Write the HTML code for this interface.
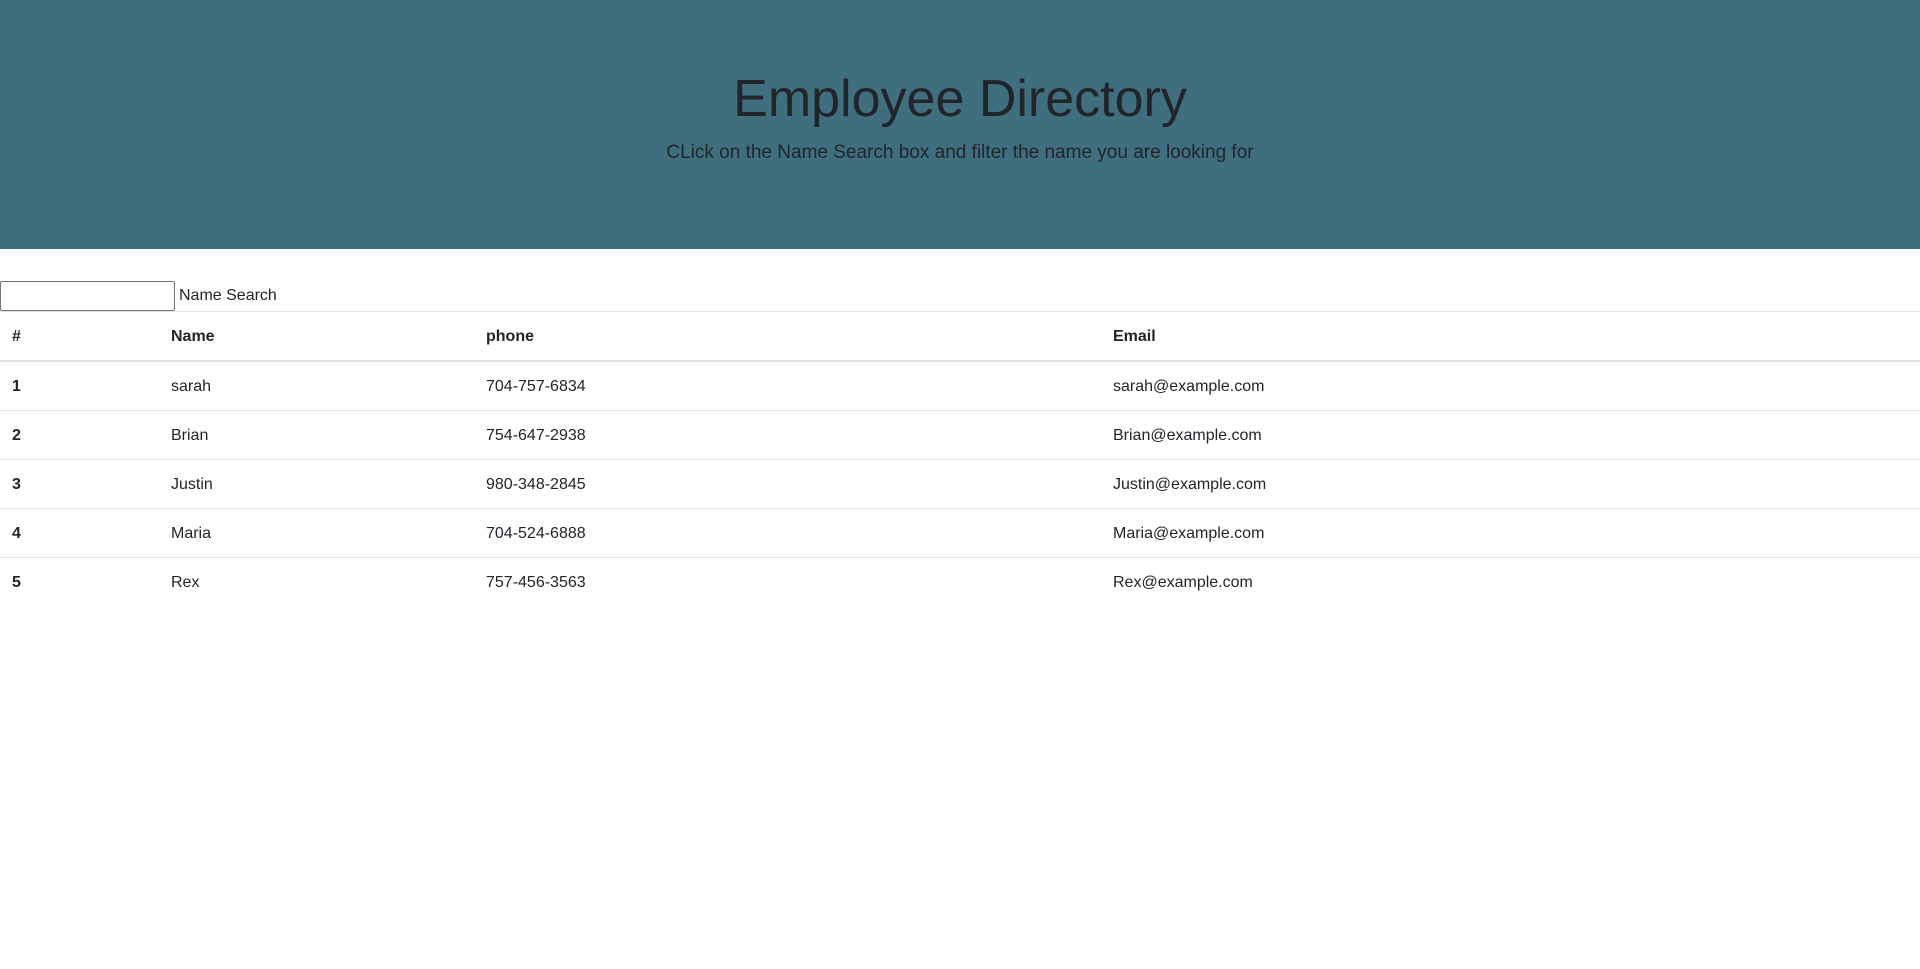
<!DOCTYPE html>
<html><head><meta charset="utf-8"><style>
body{margin:0;font-family:"Liberation Sans",sans-serif;color:#212529;background:#fff;font-size:16px;line-height:1.5}
.j{background:#3f6e7f;height:249px;text-align:center;box-sizing:border-box;padding-top:68px}
h1{margin:0;font-size:52px;font-weight:300;line-height:1.2}
.lead{margin:9px 0 0;font-size:19px;font-weight:300}
.s{margin-top:32px;height:30px;display:flex;align-items:center}
input{width:175px;height:30px;box-sizing:border-box;border:1px solid #767676;border-radius:2px;margin:0 4px 0 0;padding:0}
table{width:100%;border-collapse:collapse}
th,td{text-align:left;padding:13px 12px 11px;border-top:1px solid #dee2e6;height:24px}
thead th{border-bottom:2px solid #dee2e6;border-top:1px solid #dee2e6}
th{font-weight:bold}
</style></head><body>
<div class="j"><h1>Employee Directory</h1><p class="lead">CLick on the Name Search box and filter the name you are looking for</p></div>
<div class="s"><input type="text"><span>Name Search</span></div>
<table><colgroup><col style="width:159px"><col style="width:315px"><col style="width:627px"><col></colgroup>
<thead><tr><th>#</th><th>Name</th><th>phone</th><th>Email</th></tr></thead>
<tbody>
<tr><th>1</th><td>sarah</td><td>704-757-6834</td><td>sarah@example.com</td></tr>
<tr><th>2</th><td>Brian</td><td>754-647-2938</td><td>Brian@example.com</td></tr>
<tr><th>3</th><td>Justin</td><td>980-348-2845</td><td>Justin@example.com</td></tr>
<tr><th>4</th><td>Maria</td><td>704-524-6888</td><td>Maria@example.com</td></tr>
<tr><th>5</th><td>Rex</td><td>757-456-3563</td><td>Rex@example.com</td></tr>
</tbody></table>
</body></html>
